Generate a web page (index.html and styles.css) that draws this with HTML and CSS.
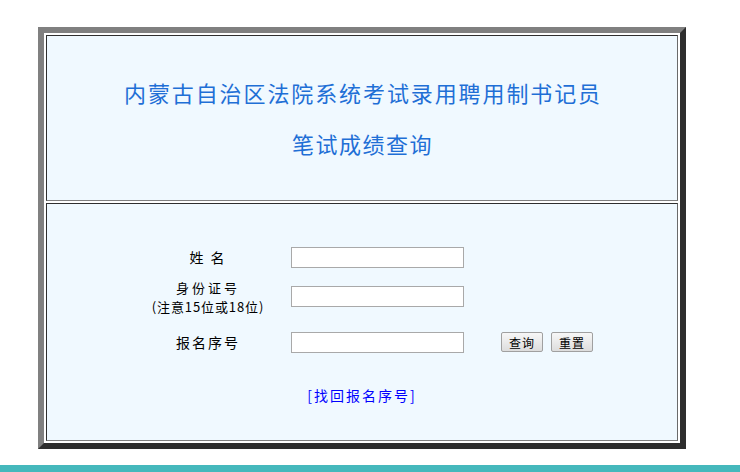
FILE: index.html
```html
<!DOCTYPE html>
<html lang="zh-CN">
<head>
    <meta charset="UTF-8">
    <title>笔试成绩查询</title>
    <link rel="stylesheet" href="styles.css">
</head>
<body>
    <div class="page">
        <div class="frame">
            <div class="cell head">
                <div class="title">内蒙古自治区法院系统考试录用聘用制书记员</div>
                <div class="subtitle">笔试成绩查询</div>
            </div>
            <div class="cell body">
                <form class="query" onsubmit="return false;">
                    <div class="label">姓&nbsp;名</div>
                    <input class="field" type="text" name="xm">
                    <div></div>

                    <div class="label two">
                        <div>身份证号</div>
                        <div class="note">(注意15位或18位)</div>
                    </div>
                    <input class="field" type="text" name="sfzh">
                    <div></div>

                    <div class="label">报名序号</div>
                    <input class="field" type="text" name="bmxh">
                    <div class="btns">
                        <button type="submit" class="btn">查询</button>
                        <button type="reset" class="btn">重置</button>
                    </div>
                </form>
                <div class="findback"><a href="#">[找回报名序号]</a></div>
            </div>
        </div>
    </div>
    <div class="bottom-bar"></div>
</body>
</html>
```

FILE: styles.css
```css
body {
    margin: 0;
    font-family: "Noto Sans CJK SC", sans-serif;
    background: #fff;
    color: #000;
}
.page {
    padding: 27px 0 0 38px;
}
.frame {
    width: 648px;
    height: 422px;
    box-sizing: border-box;
    border: 6px solid;
    border-color: #808080 #2d2d2d #2d2d2d #808080;
    padding: 2px;
    display: flex;
    flex-direction: column;
    gap: 2px;
    background: #fff;
}
.cell {
    background: #f0f9ff;
    border: 1px solid;
    border-color: #2f2f2f #6a6a6a #808080 #2f2f2f;
    box-sizing: border-box;
}
.head {
    height: 166px;
    padding-top: 41px;
    text-align: center;
    color: #1f6fd6;
    font-size: 22px;
}
.title {
    line-height: 30px;
    letter-spacing: 1.9px;
    padding-left: 2px;
}
.subtitle {
    line-height: 30px;
    margin-top: 21px;
    letter-spacing: 1.5px;
    padding-left: 1px;
}
.body {
    height: 238px;
    padding-top: 38px;
}
.query {
    display: grid;
    grid-template-columns: 136px 173px 130px;
    grid-template-rows: 30px 48px 44px;
    column-gap: 15px;
    align-items: center;
    margin-left: 93px;
}
.label {
    text-align: center;
    font-size: 14px;
    line-height: 18px;
    letter-spacing: 2px;
}
.label.two {
    display: flex;
    flex-direction: column;
    gap: 0;
    font-size: 13px;
    line-height: 19px;
    padding-top: 1px;
}
.label.two > div:first-child {
    letter-spacing: 3px;
}
.note {
    letter-spacing: 0.9px;
}
.field {
    width: 173px;
    height: 21px;
    box-sizing: border-box;
    border: 1px solid #a9a9a9;
    background: #fff;
    margin: 0;
    padding: 1px 3px;
}
.btns {
    display: flex;
    gap: 8px;
    padding-left: 22px;
}
.btn {
    width: 42px;
    height: 20px;
    padding: 0;
    font-family: "Noto Sans CJK SC", sans-serif;
    font-size: 12px;
    letter-spacing: 1px;
    color: #000;
    background: linear-gradient(#f7f7f7, #dddddd);
    border: 1px solid #a0a0a0;
    border-radius: 2px;
}
.findback {
    margin-top: 22px;
    text-align: center;
    font-size: 14px;
    line-height: 18px;
    letter-spacing: 2px;
}
.findback a {
    color: #0000ff;
    text-decoration: none;
}
.bottom-bar {
    margin-top: 16px;
    height: 8px;
    background: #45b8bc;
}
```
